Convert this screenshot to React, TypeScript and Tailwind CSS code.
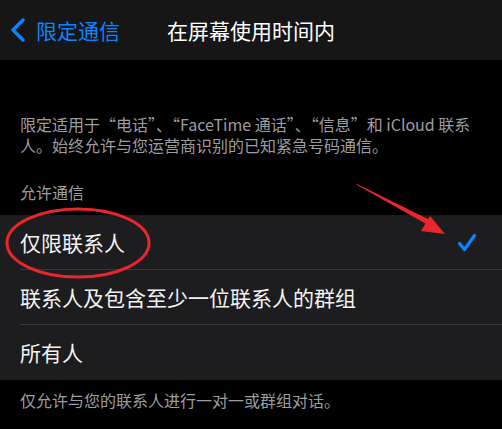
import React from "react";

const rows = ["仅限联系人", "联系人及包含至少一位联系人的群组", "所有人"];

const App: React.FC = () => {
  return (
    <div
      className="relative w-[502px] h-[429px] bg-black overflow-hidden"
      style={{ fontFamily: '"Noto Sans CJK SC", "Noto Sans", sans-serif' }}
    >
      {/* nav bar */}
      <div className="h-[60px] bg-[#161616] grid grid-cols-[1fr_auto_1fr] items-center">
        <div className="flex items-center pl-[10px] text-[#0a84ff]">
          <svg width="16" height="24" viewBox="0 0 16 24" className="mr-[10px]">
            <polyline
              points="13,2 3,12 13,22"
              fill="none"
              stroke="#0a84ff"
              strokeWidth="3.4"
              strokeLinecap="round"
              strokeLinejoin="round"
            />
          </svg>
          <span className="text-[21px] leading-none">限定通信</span>
        </div>
        <div className="text-[21px] leading-none text-white">在屏幕使用时间内</div>
        <div />
      </div>

      {/* description */}
      <div className="px-5 pt-[54px] text-[16px] leading-[21px] text-[#9d9da1] whitespace-nowrap">
        <div>限定适用于“电话”、“FaceTime 通话”、“信息”和 iCloud 联系</div>
        <div>人。始终允许与您运营商识别的已知紧急号码通信。</div>
      </div>

      <div className="px-5 mt-[26px] text-[16px] leading-[21px] text-[#9d9da1]">允许通信</div>

      {/* list */}
      <div className="mt-[12px] bg-[#1d1d1f] pl-5">
        {rows.map((r, i) => (
          <div
            key={r}
            className={
              "h-[55px] flex items-center justify-between pr-[25px] " +
              (i < rows.length - 1 ? "border-b border-[#38383a]" : "")
            }
          >
            <span className="text-[21px] leading-none text-[#f2f2f2]">{r}</span>
            {i === 0 && (
              <svg width="20" height="19" viewBox="0 0 20 19">
                <polyline
                  points="2.5,10.5 7.5,16.5 17.5,2.5"
                  fill="none"
                  stroke="#0a84ff"
                  strokeWidth="3.2"
                  strokeLinecap="round"
                  strokeLinejoin="round"
                />
              </svg>
            )}
          </div>
        ))}
      </div>

      <div className="px-5 mt-[10px] text-[16px] leading-[21px] text-[#9d9da1]">
        仅允许与您的联系人进行一对一或群组对话。
      </div>

      {/* red annotations */}
      <svg className="absolute inset-0 pointer-events-none" width="502" height="429">
        <ellipse cx="78" cy="243" rx="71" ry="34" fill="none" stroke="#e8262c" strokeWidth="3" />
        <polygon points="356,183.5 357,185 428,225 430,220" fill="#e8262c" />
        <polygon points="445,234 421,231 430,216" fill="#e8262c" />
      </svg>
    </div>
  );
};

export default App;
